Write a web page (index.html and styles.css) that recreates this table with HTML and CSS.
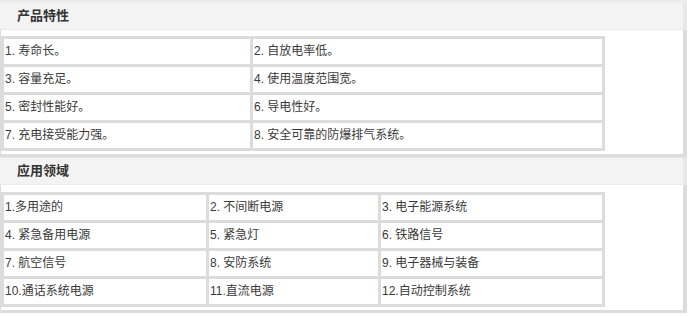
FILE: index.html
```html
<!DOCTYPE html>
<html lang="zh-CN">
<head>
<meta charset="utf-8">
<title>产品特性</title>
<link rel="stylesheet" href="styles.css">
</head>
<body>
<div class="section first">
  <div class="head">产品特性</div>
  <div class="body">
    <div class="tbl cols2">
      <div class="cell">1. 寿命长。</div>
      <div class="cell">2. 自放电率低。</div>
      <div class="cell">3. 容量充足。</div>
      <div class="cell">4. 使用温度范围宽。</div>
      <div class="cell">5. 密封性能好。</div>
      <div class="cell">6. 导电性好。</div>
      <div class="cell">7. 充电接受能力强。</div>
      <div class="cell">8. 安全可靠的防爆排气系统。</div>
    </div>
  </div>
</div>
<div class="section second">
  <div class="head">应用领域</div>
  <div class="body">
    <div class="tbl cols3">
      <div class="cell">1.多用途的</div>
      <div class="cell">2. 不间断电源</div>
      <div class="cell">3. 电子能源系统</div>
      <div class="cell">4. 紧急备用电源</div>
      <div class="cell">5. 紧急灯</div>
      <div class="cell">6. 铁路信号</div>
      <div class="cell">7. 航空信号</div>
      <div class="cell">8. 安防系统</div>
      <div class="cell">9. 电子器械与装备</div>
      <div class="cell">10.通话系统电源</div>
      <div class="cell">11.直流电源</div>
      <div class="cell">12.自动控制系统</div>
    </div>
  </div>
</div>
</body>
</html>
```
FILE: styles.css
```css
html, body {
  margin: 0;
  padding: 0;
  background: #ffffff;
}
body {
  font-family: "Liberation Sans", "Noto Sans CJK SC", sans-serif;
  color: #333333;
}
.section {
  width: 687px;
}
.section.first {
  border-top: 3px solid #ebebeb;
}
.section.second {
  border-top: 1px solid #e6e6e6;
}
.head {
  height: 26px;
  line-height: 26px;
  background: #f3f3f3;
  border-right: 4px solid #e8e8e8;
  border-bottom: 1px solid #eaeaea;
  padding-left: 17px;
  font-size: 13px;
  font-weight: bold;
  color: #333333;
}
.body {
  border-left: 1px solid #dcdcdc;
  border-right: 4px solid #dcdcdc;
  border-bottom: 3px solid #dcdcdc;
  padding: 6px 0 3px 0;
}
.second .body {
  padding-top: 7px;
}
.tbl {
  display: grid;
  width: 598px;
  border: 3px solid #dcdcdc;
  background: #dcdcdc;
  gap: 3px;
}
.cols2 {
  grid-template-columns: 246px 349px;
}
.cols3 {
  grid-template-columns: 202px 169px 221px;
}
.cell {
  background: #ffffff;
  height: 25px;
  line-height: 25px;
  padding-left: 1px;
  font-size: 12px;
  color: #3a3a3a;
  white-space: nowrap;
}
```
